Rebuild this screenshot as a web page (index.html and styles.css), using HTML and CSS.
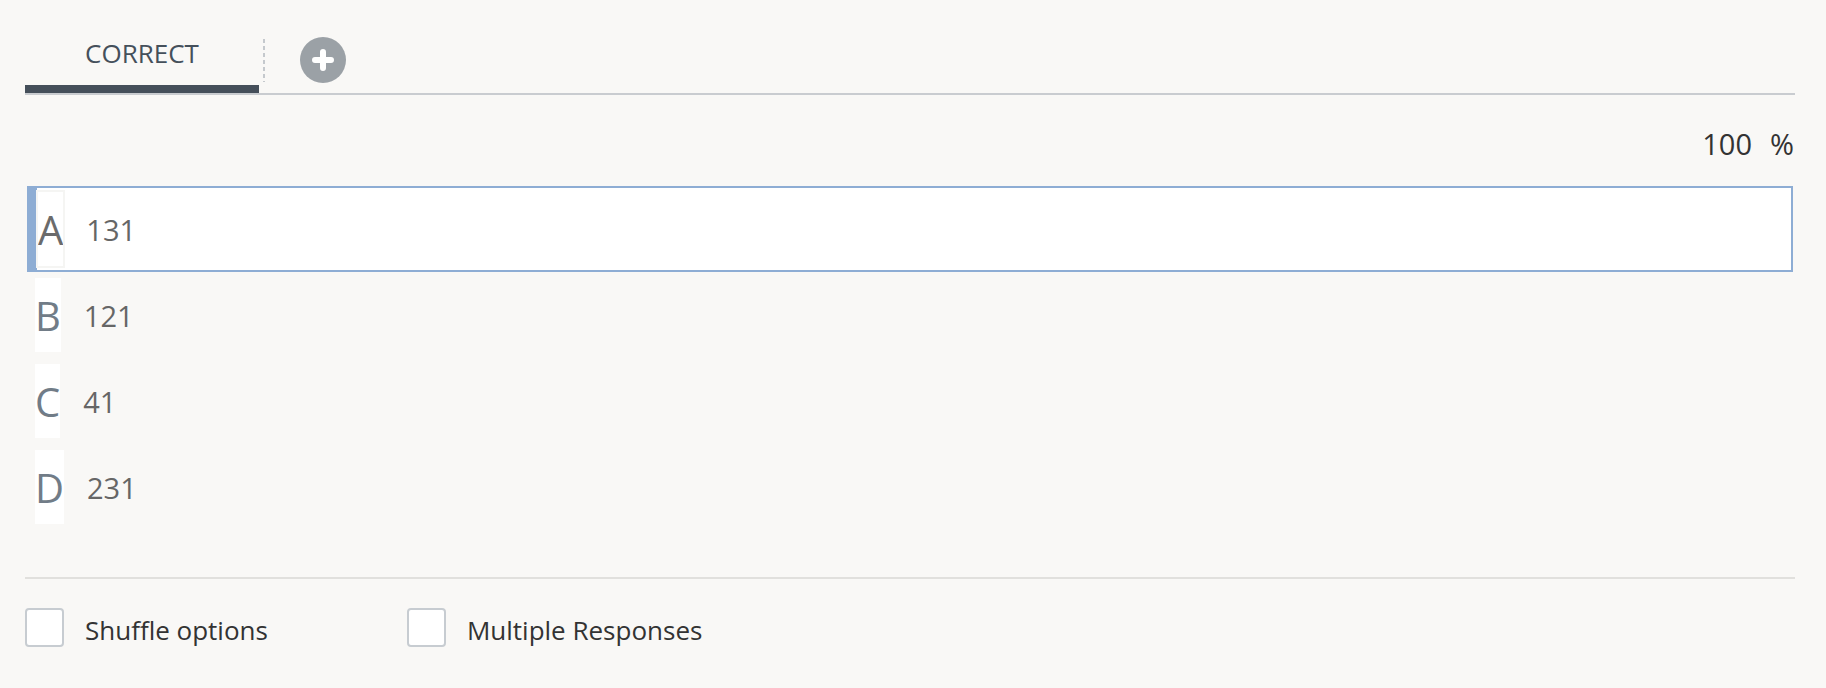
FILE: index.html
```html
<!DOCTYPE html>
<html lang="en">
<head>
<meta charset="utf-8">
<title>Multiple choice</title>
<link rel="stylesheet" href="styles.css">
</head>
<body>
<div class="editor">
  <div class="tabs">
    <div class="tab active"><span class="tab-label">CORRECT</span></div>
    <div class="tab-sep"></div>
    <button class="add-btn" type="button" aria-label="Add">
      <svg width="22" height="22" viewBox="0 0 22 22"><path d="M11 3v16M3 11h16" stroke="#fff" stroke-width="6" stroke-linecap="round"/></svg>
    </button>
  </div>

  <div class="score-row">
    <span class="score-value">100</span>
    <span class="score-unit">%</span>
  </div>

  <div class="options">
    <div class="option selected">
      <span class="letter">A</span>
      <span class="value">131</span>
    </div>
    <div class="option">
      <span class="letter">B</span>
      <span class="value">121</span>
    </div>
    <div class="option">
      <span class="letter">C</span>
      <span class="value">41</span>
    </div>
    <div class="option">
      <span class="letter">D</span>
      <span class="value">231</span>
    </div>
  </div>

  <div class="settings">
    <label class="check"><span class="box"></span><span class="check-label">Shuffle options</span></label>
    <label class="check"><span class="box"></span><span class="check-label">Multiple Responses</span></label>
  </div>
</div>
</body>
</html>
```

FILE: styles.css
```css
* { box-sizing: border-box; }

html, body {
  margin: 0;
  padding: 0;
  background: #f9f8f6;
  font-family: "Open Sans", "Noto Sans", sans-serif;
}

.editor {
  padding: 0 31px 0 25px;
}

/* Tabs */
.tabs {
  display: flex;
  align-items: flex-start;
  border-bottom: 2px solid #c9ccd0;
}

.tab {
  width: 234px;
  height: 93px;
  display: flex;
  align-items: flex-end;
  justify-content: center;
  padding-bottom: 14px;
  border-bottom: 8px solid #454f5a;
}

.tab-label {
  font-size: 26px;
  line-height: 36px;
  color: #45505b;
}

.tab-sep {
  width: 2px;
  height: 43px;
  margin: 39px 0 0 4px;
  background: repeating-linear-gradient(to bottom, #c5c9cd 0 4px, transparent 4px 7px);
}

.add-btn {
  width: 46px;
  height: 46px;
  margin: 37px 0 0 35px;
  padding: 0;
  border: 0;
  border-radius: 50%;
  background: #9ba1a6;
  display: flex;
  align-items: center;
  justify-content: center;
}

/* Score */
.score-row {
  display: flex;
  justify-content: flex-end;
  gap: 18px;
  margin-top: 29px;
  padding-right: 1px;
  font-size: 29px;
  line-height: 40px;
  color: #333;
}

/* Options */
.options {
  margin-top: 22px;
  margin-left: 2px;
  margin-right: 2px;
}

.option {
  display: flex;
  align-items: center;
  height: 86px;
  padding: 4px 0;
  border: 2px solid transparent;
  border-left-width: 8px;
}

.option.selected {
  background: #fff;
  border-color: #8eadd4;
  border-left-width: 10px;
  padding-left: 1px;
}

.letter {
  display: flex;
  align-items: center;
  height: 74px;
  background: #fff;
  font-size: 40px;
  line-height: 1;
  padding-top: 1px;
  color: #717c87;
}

.option.selected .letter {
  color: #6b6b6b;
  outline: 2px solid #f5f5f3;
}

.value {
  margin-left: 23px;
  font-size: 29px;
  color: #666;
}

/* Settings */
.settings {
  margin-top: 47px;
  border-top: 2px solid #e1e0dd;
  padding-top: 28px;
  display: flex;
  gap: 139px;
}

.check {
  display: flex;
  align-items: center;
  gap: 21px;
}

.box {
  width: 39px;
  height: 39px;
  background: #fff;
  border: 2px solid #c7ccd1;
  border-radius: 4px;
}

.check-label {
  font-size: 26px;
  line-height: 36px;
  color: #333;
  padding-top: 5px;
}
```
